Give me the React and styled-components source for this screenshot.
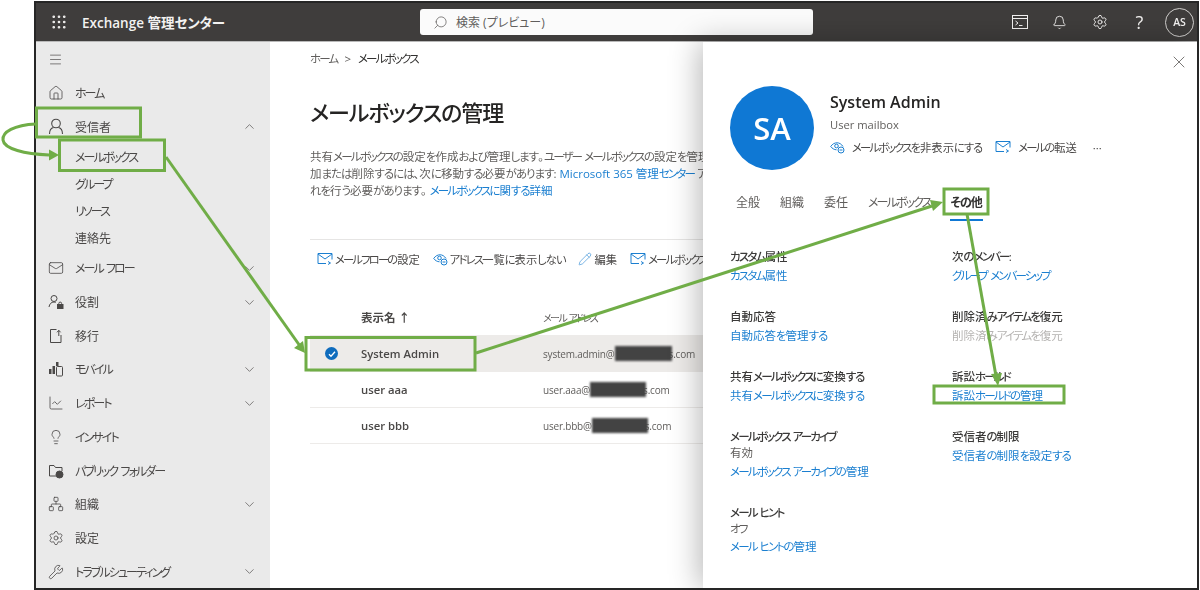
import styled, { createGlobalStyle } from "styled-components";
import {
  Bell,
  ChevronDown,
  ChevronUp,
  Grip,
  House,
  Lightbulb,
  LineChart,
  Mail,
  Menu,
  Network,
  Pencil,
  Search,
  Settings,
  Wrench,
  X,
} from "lucide-react";

const GlobalStyle = createGlobalStyle`
  html, body {
    margin: 0;
    background: #fff;
    overflow: hidden;
  }
  body {
    font-family: "Open Sans", "Noto Sans CJK JP", sans-serif;
    font-feature-settings: "palt";
    font-size: 12px;
    color: #323130;
  }
`;

const Page = styled.div`
  position: relative;
  width: 1200px;
  height: 590px;
  padding: 1px 0 0 34px;
  box-sizing: border-box;
  overflow: hidden;
`;
const Frame = styled.div`
  width: 1165px;
  height: 589px;
  box-sizing: border-box;
  border: 2px solid #262626;
  display: flex;
  flex-direction: column;
  overflow: hidden;
  filter: blur(0.35px);
`;

// the reference font has much narrower kana than Noto, so kana runs get tightened
const Kata = styled.span`
  letter-spacing: -0.16em;
`;
const Hira = styled.span`
  letter-spacing: -0.09em;
`;
function Jp({ children }) {
  const parts = children.split(/([\u30A0-\u30FF]+|[\u3040-\u309F]+)/).filter(Boolean);
  return (
    <span>
      {parts.map((t, i) => {
        if (/^[\u30A0-\u30FF]/.test(t)) return <Kata key={i}>{t}</Kata>;
        if (/^[\u3040-\u309F]/.test(t)) return <Hira key={i}>{t}</Hira>;
        return t;
      })}
    </span>
  );
}

// top bar
const Header = styled.header`
  height: 39px;
  flex: none;
  box-sizing: border-box;
  background: #3f3d3c;
  border-bottom: 1px solid #b9b9b9;
  display: flex;
  align-items: center;
  color: #f3f2f1;
`;
const AppGrid = styled.div`
  width: 46px;
  display: flex;
  justify-content: center;
`;
const AppTitle = styled.div`
  font-size: 13.5px;
  font-weight: 600;
  width: 338px;
  white-space: nowrap;
`;
const SearchBox = styled.div`
  width: 393px;
  height: 26px;
  background: #fbfbfb;
  border-radius: 3px;
  display: flex;
  align-items: center;
  gap: 8px;
  padding-left: 13px;
  box-sizing: border-box;
  color: #605e5c;
  font-size: 12px;
`;
const HeaderIcons = styled.div`
  margin-left: auto;
  display: flex;
  align-items: center;
  gap: 21px;
  padding-right: 3px;
`;
const HeaderIcon = styled.div`
  width: 19px;
  height: 20px;
  display: flex;
  align-items: center;
  justify-content: center;
  font-size: 18px;
`;
const Me = styled.div`
  width: 27px;
  height: 27px;
  margin-left: -5px;
  border-radius: 50%;
  border: 1px solid #d2d0ce;
  display: flex;
  align-items: center;
  justify-content: center;
  font-size: 10.5px;
  font-weight: 600;
`;

const Body = styled.div`
  flex: 1;
  min-height: 0;
  display: flex;
`;

// left nav
const Sidebar = styled.nav`
  width: 234px;
  flex: none;
  padding-top: 0.5px;
  background: #eaeaea;
  overflow: hidden;
  color: #4a4847;
`;
const NavRow = styled.div`
  height: ${(p) => (p.$sub ? "27px" : "33.7px")};
  display: flex;
  align-items: center;
  padding-left: ${(p) => (p.$sub ? "39px" : "12px")};
  padding-right: 13px;
  white-space: nowrap;
`;
const NavIcon = styled.span`
  width: 27px;
  flex: none;
  display: flex;
  align-items: center;
`;
const Chevron = styled.span`
  margin-left: auto;
  display: flex;
  color: #5c5a58;
`;

// list page
const Main = styled.main`
  flex: 1;
  min-width: 0;
  padding: 9px 0 0 40px;
  overflow: hidden;
`;
const Breadcrumb = styled.div`
  display: flex;
  gap: 7px;
  height: 16px;
  line-height: 16px;
  font-size: 11.5px;
  white-space: nowrap;
  color: #605e5c;
  b {
    font-weight: 400;
    color: #323130;
  }
`;
const Title = styled.h1`
  margin: 29px 0 0;
  font-size: 22px;
  font-weight: 500;
  letter-spacing: -1.1px;
  line-height: 32px;
  color: #252423;
  white-space: nowrap;
`;
const Description = styled.p`
  margin: 20px 0 0;
  width: 440px;
  font-size: 11.5px;
  line-height: 17px;
  color: #605e5c;
  white-space: nowrap;
`;
const Link = styled.a`
  color: ${(p) => (p.$off ? "#b5b3b1" : "#1b7fd0")};
  text-decoration: none;
`;
const Toolbar = styled.div`
  margin: 40px -40px 0 0;
  border-top: 1px solid #e6e5e4;
  height: 38px;
  display: flex;
  align-items: center;
  gap: 13px;
  padding: 0 0 0 7px;
  white-space: nowrap;
  color: #4a4847;
`;
const Tool = styled.span`
  display: flex;
  align-items: center;
  gap: 2px;
  font-size: 11.3px;
`;
const TableRow = styled.div`
  display: grid;
  grid-template-columns: 51px 182px 1fr;
  align-items: center;
  box-sizing: border-box;
  height: ${(p) => p.$h || "36px"};
  background: ${(p) => (p.$on ? "#edebe9" : "transparent")};
  border-bottom: ${(p) => (p.$line ? "1px solid #edebe9" : "none")};
  white-space: nowrap;
`;
const HeadRow = styled(TableRow)`
  margin-top: 24px;
  padding-bottom: 3px;
`;
const NameCell = styled.span`
  font-size: ${(p) => (p.$head ? "11.5px" : "11.3px")};
  font-weight: 600;
  color: #4a4847;
`;
const MailCell = styled.span`
  font-size: 10px;
  letter-spacing: -0.2px;
  color: #605e5c;
  display: flex;
  align-items: center;
`;
const Redact = styled.span`
  width: ${(p) => p.$w}px;
  height: 15px;
  background: #434343;
  flex: none;
  z-index: 1;
  filter: blur(1px);
`;
const MailTail = styled.span`
  margin-left: -3px;
`;
const CheckDot = styled.span`
  width: 13px;
  height: 13px;
  border-radius: 50%;
  background: #0f6cbd;
  margin-left: 15px;
  display: flex;
  align-items: center;
  justify-content: center;
`;

// detail panel
const Panel = styled.aside`
  width: 494px;
  flex: none;
  position: relative;
  z-index: 1;
  background: #fff;
  box-shadow: -4px 0 28px rgba(0, 0, 0, 0.28);
  padding-left: 27px;
  box-sizing: border-box;
`;
const CloseRow = styled.div`
  height: 44px;
  box-sizing: border-box;
  padding: 10px 8px 0 0;
  display: flex;
  justify-content: flex-end;
  align-items: flex-start;
  color: #605e5c;
`;
const Persona = styled.div`
  display: flex;
  gap: 16px;
`;
const Avatar = styled.div`
  width: 84px;
  height: 84px;
  border-radius: 50%;
  background: #0f78d4;
  color: #fff;
  display: flex;
  align-items: center;
  justify-content: center;
  font-size: 31px;
  font-weight: 600;
`;
const PersonaName = styled.div`
  font-size: 16px;
  font-weight: 600;
  line-height: 20px;
  color: #252423;
  margin-top: 6px;
`;
const PersonaSub = styled.div`
  font-size: 11.2px;
  line-height: 16px;
  margin-top: 5px;
  color: #605e5c;
`;
const Actions = styled.div`
  display: flex;
  align-items: center;
  gap: 13px;
  margin-top: 6px;
  color: #4a4847;
  height: 16px;
`;
const Tabs = styled.div`
  display: flex;
  gap: 20px;
  margin-top: 24px;
  padding-left: 6px;
  color: #605e5c;
`;
const Tab = styled.span`
  padding-bottom: ${(p) => (p.$on ? "8px" : "0")};
  line-height: 17px;
  height: 17px;
  box-sizing: content-box;
  font-weight: ${(p) => (p.$on ? 600 : 400)};
  color: ${(p) => (p.$on ? "#323130" : "inherit")};
  border-bottom: ${(p) => (p.$on ? "2px solid #0f78d4" : "none")};
`;
const Fields = styled.div`
  display: grid;
  grid-template-columns: 222px 1fr;
  row-gap: 21px;
  margin-top: 26px;
  align-items: start;
`;
const Field = styled.div`
  display: flex;
  flex-direction: column;
  white-space: nowrap;
  line-height: 19px;
  font-size: 11.5px;
`;
const FieldTitle = styled.div`
  font-weight: 500;
  color: #3b3a39;
`;
const FieldValue = styled.div`
  color: #605e5c;
  line-height: 13px;
  margin-bottom: 2.5px;
`;
const FieldLink = styled(Link)`
  line-height: 20px;
`;

// green annotation layer, sits on top of the shot
const Notes = styled.svg`
  position: absolute;
  left: 0;
  top: 0;
  pointer-events: none;
`;

const ic = { size: 16, strokeWidth: 1.2 };
const blue = "#1b7fd0";

function PersonIcon() {
  return (
    <svg width="16" height="17" viewBox="0 0 16 17" fill="none" stroke="currentColor" strokeWidth="1.100">
      <circle cx="8" cy="5.500" r="4.300" />
      <path d="M1.500 16c0-3.500 2-6 4-6.500M14.500 16c0-3.500-2-6-4-6.500" />
    </svg>
  );
}
function RoleIcon() {
  return (
    <svg width="16" height="16" viewBox="0 0 16 16" fill="none" stroke="currentColor" strokeWidth="1">
      <circle cx="6" cy="4.500" r="3" />
      <path d="M1 13c.5-3 2.200-5 5-5 .7 0 1.300.1 1.800.3" />
      <rect x="9.500" y="10.500" width="5.500" height="4" fill="currentColor" />
      <path d="M10.800 10.500V9.500a1.400 1.400 0 0 1 2.800 0v1" />
    </svg>
  );
}
function MigrateIcon() {
  return (
    <svg width="16" height="16" viewBox="0 0 16 16" fill="none" stroke="currentColor" strokeWidth="1">
      <path d="M8.500 1.500H2.500v13h10.500V7" />
      <path d="M10.800 8V2.500M9 4.300l1.800-2 1.800 2" />
    </svg>
  );
}
function MobileIcon() {
  return (
    <svg width="16" height="16" viewBox="0 0 16 16" fill="none">
      <rect x="1" y="8" width="2.500" height="5" fill="currentColor" />
      <rect x="4.500" y="5" width="2.500" height="8" fill="currentColor" />
      <rect x="8" y="1" width="2.500" height="4" fill="currentColor" />
      <rect x="8.500" y="5.500" width="6" height="9.500" rx="1" stroke="currentColor" />
    </svg>
  );
}
function FolderIcon() {
  return (
    <svg width="16" height="16" viewBox="0 0 16 16" fill="none" stroke="currentColor" strokeWidth="1">
      <path d="M8 13H1.500V2.500h4.500l1.500 2h6.500V8" />
      <circle cx="11.500" cy="11.500" r="3.500" fill="currentColor" />
    </svg>
  );
}
function TerminalIcon() {
  return (
    <svg width="16" height="14" viewBox="0 0 16 14" fill="none" stroke="currentColor">
      <rect x="0.500" y="0.500" width="15" height="13" />
      <path d="M1 3.500h14" />
      <path d="M3.500 6l2.500 2-2.500 2M7 10.500h3.500" />
    </svg>
  );
}
function HideIcon() {
  return (
    <svg width="15" height="14" viewBox="0 0 15 14" fill="none" stroke={blue} strokeWidth="1">
      <path d="M.7 6.500C2.500 3.800 4.800 2.800 7 2.800c2.300 0 4.300 1.100 6 3.700" />
      <path d="M.7 6.500c1.500 2 3.500 3.200 5.800 3.300" />
      <circle cx="6.500" cy="6" r="1.800" />
      <circle cx="11" cy="10" r="3" />
      <path d="M9.500 10h3" />
    </svg>
  );
}
function MailGearIcon() {
  return (
    <svg width="16" height="14" viewBox="0 0 16 14" fill="none" stroke={blue} strokeWidth="1">
      <path d="M9 11.500H1V1.500h14v6" />
      <path d="M1 2l7 5 7-5" />
      <path d="M11 9.500l2.500 1.500-2.500 1.500" />
    </svg>
  );
}

const navTop = [
  { label: "ホーム", icon: <House {...ic} /> },
  { label: "受信者", icon: <PersonIcon />, open: true },
];
const navSub = ["メールボックス", "グループ", "リソース", "連絡先"];
const navRest = [
  { label: "メール フロー", icon: <Mail {...ic} />, more: true },
  { label: "役割", icon: <RoleIcon />, more: true },
  { label: "移行", icon: <MigrateIcon /> },
  { label: "モバイル", icon: <MobileIcon />, more: true },
  { label: "レポート", icon: <LineChart {...ic} />, more: true },
  { label: "インサイト", icon: <Lightbulb {...ic} /> },
  { label: "パブリック フォルダー", icon: <FolderIcon /> },
  { label: "組織", icon: <Network {...ic} />, more: true },
  { label: "設定", icon: <Settings {...ic} /> },
  { label: "トラブルシューティング", icon: <Wrench {...ic} />, more: true },
];

function NavItem({ item }) {
  return (
    <NavRow>
      <NavIcon>{item.icon}</NavIcon>
      <Jp>{item.label}</Jp>
      {item.open && (
        <Chevron>
          <ChevronUp size={15} strokeWidth={1.2} />
        </Chevron>
      )}
      {item.more && (
        <Chevron>
          <ChevronDown size={15} strokeWidth={1.2} />
        </Chevron>
      )}
    </NavRow>
  );
}

const users = [
  { name: "System Admin", user: "system.admin@", w: 57, on: true, h: "37px" },
  { name: "user aaa", user: "user.aaa@", w: 56, line: true },
  { name: "user bbb", user: "user.bbb@", w: 56, line: true },
];

const fields = [
  { title: "カスタム属性", link: "カスタム属性" },
  { title: "次のメンバー:", link: "グループ メンバーシップ" },
  { title: "自動応答", link: "自動応答を管理する" },
  { title: "削除済みアイテムを復元", link: "削除済みアイテムを復元", off: true },
  { title: "共有メールボックスに変換する", link: "共有メールボックスに変換する" },
  { title: "訴訟ホールド", link: "訴訟ホールドの管理" },
  { title: "メールボックス アーカイブ", value: "有効", link: "メールボックス アーカイブの管理" },
  { title: "受信者の制限", link: "受信者の制限を設定する" },
  { title: "メール ヒント", value: "オフ", link: "メール ヒントの管理" },
];

const green = "#70ad47";

function Annotations() {
  return (
    <Notes width="1200" height="590" viewBox="0 0 1200 590" fill="none">
      <g stroke={green} strokeWidth="3">
        <rect x="36.500" y="108" width="104" height="29" />
        <rect x="59.500" y="140" width="105" height="30.500" />
        <rect x="306" y="337.500" width="169" height="32.500" />
        <rect x="944" y="189" width="44" height="25" />
        <rect x="934" y="386" width="130" height="17" />
        <path d="M36 124C14 125 2 132 3 140c1 9 22 14 46 15" />
        <path d="M166 157L300 346" />
        <path d="M476 353L932 206" />
        <path d="M967 214L996 376" />
      </g>
      <g fill={green}>
        <path d="M59 155L49 149.500V160.500Z" />
        <path d="M305 353L294 348L303 341Z" />
        <path d="M943 202L930 200L933 211Z" />
        <path d="M998 386L991 374L1002 373Z" />
      </g>
    </Notes>
  );
}

export default function App() {
  return (
    <Page>
      <GlobalStyle />
      <Frame>
        <Header>
          <AppGrid>
            <Grip size={18} strokeWidth={1.6} />
          </AppGrid>
          <AppTitle>Exchange 管理センター</AppTitle>
          <SearchBox>
            <Search size={15} strokeWidth={1.2} style={{ transform: "scaleX(-1)" }} />
            検索 (プレビュー)
          </SearchBox>
          <HeaderIcons>
            <HeaderIcon>
              <TerminalIcon />
            </HeaderIcon>
            <HeaderIcon>
              <Bell size={15} strokeWidth={1.4} />
            </HeaderIcon>
            <HeaderIcon>
              <Settings size={16} strokeWidth={1.4} />
            </HeaderIcon>
            <HeaderIcon>?</HeaderIcon>
            <Me>AS</Me>
          </HeaderIcons>
        </Header>
        <Body>
          <Sidebar>
            <NavRow>
              <Menu size={15} strokeWidth={1.1} />
            </NavRow>
            {navTop.map((n) => (
              <NavItem key={n.label} item={n} />
            ))}
            {navSub.map((s) => (
              <NavRow $sub key={s}>
                <Jp>{s}</Jp>
              </NavRow>
            ))}
            {navRest.map((n) => (
              <NavItem key={n.label} item={n} />
            ))}
          </Sidebar>
          <Main>
            <Breadcrumb>
              <Jp>ホーム</Jp> <span>&gt;</span>{" "}
              <b>
                <Jp>メールボックス</Jp>
              </b>
            </Breadcrumb>
            <Title>メールボックスの管理</Title>
            <Description>
              <Jp>共有メールボックスの設定を作成および管理します。ユーザー メールボックスの設定を管理</Jp>
              <br />
              <Jp>加または削除するには、次に移動する必要があります: </Jp>
              <Link>
                <Jp>Microsoft 365 管理センター</Jp>
              </Link>{" "}
              ア
              <br />
              <Jp>れを行う必要があります。 </Jp>
              <Link>
                <Jp>メールボックスに関する詳細</Jp>
              </Link>
            </Description>
            <Toolbar>
              <Tool>
                <MailGearIcon />
                <Jp>メールフローの設定</Jp>
              </Tool>
              <Tool>
                <HideIcon />
                <Jp>アドレス一覧に表示しない</Jp>
              </Tool>
              <Tool>
                <Pencil size={14} strokeWidth={1} color={blue} />
                編集
              </Tool>
              <Tool>
                <MailGearIcon />
                <Jp>メールボックス</Jp>
              </Tool>
            </Toolbar>
            <HeadRow $h="33px">
              <span />
              <NameCell $head>表示名 ↑</NameCell>
              <MailCell>
                <Jp>メール アドレス</Jp>
              </MailCell>
            </HeadRow>
            {users.map((u) => (
              <TableRow key={u.name} $on={u.on} $line={u.line} $h={u.h}>
                <span>
                  {u.on && (
                    <CheckDot>
                      <svg width="8" height="8" viewBox="0 0 8 8" fill="none" stroke="#fff" strokeWidth="1.300">
                        <path d="M1 4.200l2 2 4-4.400" />
                      </svg>
                    </CheckDot>
                  )}
                </span>
                <NameCell>{u.name}</NameCell>
                <MailCell>
                  {u.user}
                  <Redact $w={u.w} />
                  <MailTail>s.com</MailTail>
                </MailCell>
              </TableRow>
            ))}
          </Main>
          <Panel>
            <CloseRow>
              <X size={20} strokeWidth={1} />
            </CloseRow>
            <Persona>
              <Avatar>SA</Avatar>
              <div>
                <PersonaName>System Admin</PersonaName>
                <PersonaSub>User mailbox</PersonaSub>
                <Actions>
                  <Tool>
                    <HideIcon />
                    &nbsp;<Jp>メールボックスを非表示にする</Jp>
                  </Tool>
                  <Tool>
                    <MailGearIcon />
                    &nbsp;<Jp>メールの転送</Jp>
                  </Tool>
                  <Tool>&nbsp;···</Tool>
                </Actions>
              </div>
            </Persona>
            <Tabs>
              <Tab>全般</Tab>
              <Tab>組織</Tab>
              <Tab>委任</Tab>
              <Tab>
                <Jp>メールボックス</Jp>
              </Tab>
              <Tab $on>
                <Jp>その他</Jp>
              </Tab>
            </Tabs>
            <Fields>
              {fields.map((f) => (
                <Field key={f.title}>
                  <FieldTitle>
                    <Jp>{f.title}</Jp>
                  </FieldTitle>
                  {f.value && (
                    <FieldValue>
                      <Jp>{f.value}</Jp>
                    </FieldValue>
                  )}
                  <FieldLink $off={f.off}>
                    <Jp>{f.link}</Jp>
                  </FieldLink>
                </Field>
              ))}
            </Fields>
          </Panel>
        </Body>
      </Frame>
      <Annotations />
    </Page>
  );
}
